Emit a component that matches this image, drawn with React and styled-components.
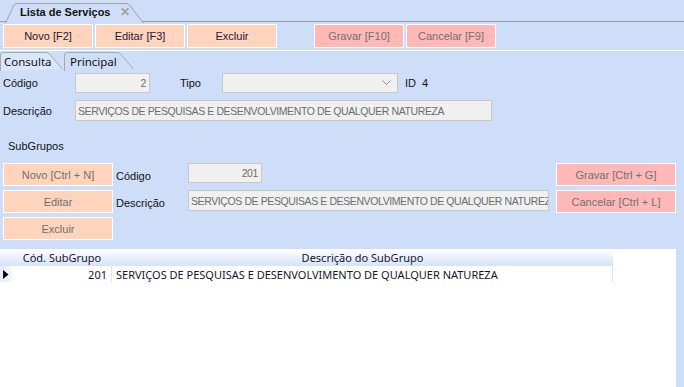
import React from 'react'
import styled, { createGlobalStyle, css } from 'styled-components'

const GlobalStyle = createGlobalStyle`
  html, body {
    margin: 0;
    padding: 0;
    background: #cfdef8;
  }

  body {
    font-family: "Liberation Sans", Arial, sans-serif;
    font-size: 11px;
    color: #000;
  }
`

const Page = styled.div`
  width: 684px;
  height: 387px;
  overflow: hidden;
  background: #cfdef8;
  display: flex;
  flex-direction: column;
`

const DocStrip = styled.div`
  height: 21px;
  flex: none;
  display: flex;
  align-items: flex-end;
  padding-left: 5px;
  border-bottom: 1px solid #a0a0a0;
`

const DocTab = styled.div`
  position: relative;
  width: 139px;
  height: 20px;
  margin-bottom: -1px;
  display: flex;
  align-items: center;
  padding-left: 15px;
  box-sizing: border-box;
  font-weight: bold;
  font-size: 11px;
  color: #111;

  svg {
    position: absolute;
    left: 0;
    top: 0;
  }

  span {
    position: relative;
  }
`

const CloseMark = styled.span`
  margin-left: 9px;
  color: #a0a0a0;
  font-size: 12px;
  font-weight: bold;
`

const Toolbar = styled.div`
  flex: none;
  display: flex;
  gap: 2px;
  padding: 2px 0 2px 3px;
  border-bottom: 1px solid #fff;
`

const Button = styled.div`
  box-sizing: border-box;
  display: flex;
  align-items: center;
  justify-content: center;
  width: ${({ $w }) => $w || 90}px;
  height: ${({ $h }) => $h || 24}px;
  border: 1px solid #fff;
  background: ${({ $tone }) => ($tone === 'red' ? '#ffb8b8' : '#ffd4bc')};
  color: ${({ $off }) => ($off ? '#707070' : '#1a1a3a')};
  white-space: nowrap;
  ${({ $gap }) => $gap && css`margin-left: ${$gap}px;`}
`

const TabStrip = styled.div`
  flex: none;
  height: 19px;
  display: flex;
  align-items: flex-end;
  gap: 1px;
`

const PageTab = styled.div`
  position: relative;
  height: 18px;
  width: ${({ $w }) => $w}px;
  display: flex;
  align-items: center;
  padding-left: ${({ $pad }) => $pad}px;
  box-sizing: border-box;
  font-family: "Noto Sans", "Open Sans", sans-serif;
  font-size: 11.5px;
  color: #111;

  svg {
    position: absolute;
    left: 0;
    top: 0;
  }

  span {
    position: relative;
  }
`

const Form = styled.div`
  flex: none;
  padding-left: 3px;
  display: flex;
  flex-direction: column;
`

const Row = styled.div`
  display: flex;
  align-items: center;
  margin-top: ${({ $top }) => $top || 0}px;
`

const Label = styled.div`
  width: ${({ $w }) => $w || 72}px;
  flex: none;
  color: #111;
  ${({ $left }) => $left && css`margin-left: ${$left}px;`}
  ${({ $shift }) => $shift && css`padding-top: ${$shift}px; align-self: flex-start;`}
`

const Input = styled.div`
  box-sizing: border-box;
  width: ${({ $w }) => $w}px;
  height: ${({ $h }) => $h || 20}px;
  flex: none;
  background: #f0f0f0;
  border: 1px solid #c8c8c8;
  color: #6d6d6d;
  font-size: 10.5px;
  letter-spacing: -0.4px;
  display: flex;
  align-items: center;
  justify-content: ${({ $right }) => ($right ? 'flex-end' : 'flex-start')};
  padding: 0 3px 0 2px;
  overflow: hidden;
  white-space: nowrap;
`

const Select = styled(Input)`
  justify-content: flex-end;
  padding-right: 6px;
`

const SectionTitle = styled.div`
  margin: 19px 0 0 5px;
  height: 12px;
  line-height: 12px;
  color: #111;
`

const SubArea = styled.div`
  flex: none;
  display: flex;
  margin-top: 11px;
  padding-left: 3px;
`

const ButtonColumn = styled.div`
  display: flex;
  flex-direction: column;
  gap: 4px;
  ${({ $right }) => $right && css`margin-left: auto; margin-right: 8px;`}
`

const Fields = styled.div`
  display: flex;
  flex-direction: column;
  gap: 7px;
  margin-left: 3px;
`

const FieldRow = styled.div`
  display: flex;
  align-items: flex-start;
`

const Grid = styled.div`
  flex: 1;
  width: 676px;
  margin-top: 9px;
  background: #fff;
  font-family: "Noto Sans", "Open Sans", sans-serif;
  font-size: 11px;
`

const GridRow = styled.div`
  display: flex;
  height: ${({ $head }) => ($head ? 17 : 16)}px;
  width: 613px;
  ${({ $head }) => $head && css`
    background: linear-gradient(#ffffff, #d5e2f8);
  `}
`

const Cell = styled.div`
  box-sizing: border-box;
  width: ${({ $w }) => $w}px;
  flex: none;
  display: flex;
  align-items: center;
  justify-content: ${({ $align }) => $align || 'flex-start'};
  padding: ${({ $pad }) => $pad || '0'};
  color: #15152a;
  white-space: nowrap;
  overflow: hidden;
  ${({ $line }) => $line && css`border-right: 1px solid #e4e4e4;`}
`

const Indicator = styled(Cell)`
  background: ${({ $head }) => ($head ? 'transparent' : 'linear-gradient(90deg, #e3ebf8, #f4f7fc)')};
`

const DocTabShape = () => (
  <svg width='139' height='21' viewBox='0 0 139 21'>
    <path
      d='M0.5 21 L9 3 Q10 1.5 12 1.5 L121 1.5 Q123 1.5 124.5 3 L138.5 21'
      fill='#cfdef8'
      stroke='#a0a0a0'
      strokeWidth='1'
    />
  </svg>
)

const PageTabShape = ({ w, fill }) => (
  <svg width={w} height='19' viewBox={`0 0 ${w} 19`}>
    <path
      d={`M0.5 19 L0.5 3 Q0.5 0.5 3 0.5 L${w - 17} 0.5 Q${w - 15} 0.5 ${w - 13} 2.5 L${w - 0.5} 17`}
      fill={fill}
      stroke='#a8a8a8'
      strokeWidth='1'
    />
  </svg>
)

const Chevron = () => (
  <svg width='9' height='6' viewBox='0 0 9 6'>
    <path d='M0.5 0.5 L4.5 4.5 L8.5 0.5' fill='none' stroke='#8a8a8a' strokeWidth='1' />
  </svg>
)

const RowMarker = () => (
  <svg width='6' height='9' viewBox='0 0 6 9'>
    <path d='M0 0 L5.5 4.5 L0 9 Z' fill='#000' />
  </svg>
)

const DESCRICAO = 'SERVIÇOS DE PESQUISAS E DESENVOLVIMENTO DE QUALQUER NATUREZA'

export default function App () {
  return (
    <Page>
      <GlobalStyle />
      <DocStrip>
        <DocTab>
          <DocTabShape />
          <span>Lista de Serviços</span>
          <CloseMark>✕</CloseMark>
        </DocTab>
      </DocStrip>

      <Toolbar>
        <Button>Novo [F2]</Button>
        <Button>Editar [F3]</Button>
        <Button>Excluir</Button>
        <Button $tone='red' $off $gap={35}>Gravar [F10]</Button>
        <Button $tone='red' $off>Cancelar [F9]</Button>
      </Toolbar>

      <TabStrip>
        <PageTab $w={63} $pad={4}>
          <PageTabShape w={63} fill='#dbe6fa' />
          <span>Consulta</span>
        </PageTab>
        <PageTab $w={70} $pad={6}>
          <PageTabShape w={70} fill='#cfdef8' />
          <span>Principal</span>
        </PageTab>
      </TabStrip>

      <Form>
        <Row $top={3}>
          <Label>Código</Label>
          <Input $w={75} $right>2</Input>
          <Label $w={42} $left={30}>Tipo</Label>
          <Select $w={176}><Chevron /></Select>
          <Label $w={40} $left={7}>ID&nbsp;&nbsp;4</Label>
        </Row>
        <Row $top={7}>
          <Label>Descrição</Label>
          <Input $w={417} $h={21}>{DESCRICAO}</Input>
        </Row>
        <SectionTitle>SubGrupos</SectionTitle>
      </Form>

      <SubArea>
        <ButtonColumn>
          <Button $w={110} $h={23} $off>Novo [Ctrl + N]</Button>
          <Button $w={110} $h={23} $off>Editar</Button>
          <Button $w={110} $h={23} $off>Excluir</Button>
        </ButtonColumn>
        <Fields>
          <FieldRow>
            <Label $shift={7}>Código</Label>
            <Input $w={74} $right>201</Input>
          </FieldRow>
          <FieldRow>
            <Label $shift={7}>Descrição</Label>
            <Input $w={361} $h={21}>{DESCRICAO}</Input>
          </FieldRow>
        </Fields>
        <ButtonColumn $right>
          <Button $w={120} $h={23} $tone='red' $off>Gravar [Ctrl + G]</Button>
          <Button $w={120} $h={23} $tone='red' $off>Cancelar [Ctrl + L]</Button>
        </ButtonColumn>
      </SubArea>

      <Grid>
        <GridRow $head>
          <Indicator $w={12} $head />
          <Cell $w={100} $align='center'>Cód. SubGrupo</Cell>
          <Cell $w={501} $align='center'>Descrição do SubGrupo</Cell>
        </GridRow>
        <GridRow>
          <Indicator $w={12} $align='center'><RowMarker /></Indicator>
          <Cell $w={100} $align='flex-end' $pad='0 4px 0 0' $line>201</Cell>
          <Cell $w={501} $pad='0 0 0 4px' $line>{DESCRICAO}</Cell>
        </GridRow>
      </Grid>
    </Page>
  )
}
